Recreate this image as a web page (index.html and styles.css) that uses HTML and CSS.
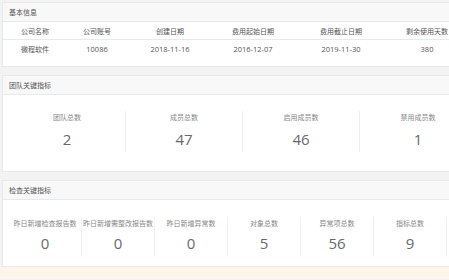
FILE: index.html
```html
<!DOCTYPE html>
<html lang="zh-CN">

<head>
    <meta charset="UTF-8">
    <meta name="viewport" content="width=device-width, initial-scale=1.0">
    <title>概览</title>
    <link rel="stylesheet" href="styles.css">
</head>

<body>
    <div class="wrapper">
        <!-- 基本信息 -->
        <div class="panel">
            <div class="panel-heading">基本信息</div>
            <div class="panel-body table-body">
                <table class="info-table">
                    <thead>
                        <tr>
                            <th class="c1">公司名称</th>
                            <th class="c2">公司账号</th>
                            <th class="c3">创建日期</th>
                            <th class="c4">费用起始日期</th>
                            <th class="c5">费用截止日期</th>
                            <th class="c6">剩余使用天数</th>
                        </tr>
                    </thead>
                    <tbody>
                        <tr>
                            <td>微程软件</td>
                            <td>10086</td>
                            <td>2018-11-16</td>
                            <td>2016-12-07</td>
                            <td>2019-11-30</td>
                            <td>380</td>
                        </tr>
                    </tbody>
                </table>
            </div>
        </div>

        <!-- 团队关键指标 -->
        <div class="panel">
            <div class="panel-heading">团队关键指标</div>
            <div class="panel-body stats team-stats">
                <div class="stat">
                    <div class="stat-label">团队总数</div>
                    <div class="stat-num">2</div>
                </div>
                <div class="stat">
                    <div class="stat-label">成员总数</div>
                    <div class="stat-num">47</div>
                </div>
                <div class="stat">
                    <div class="stat-label">启用成员数</div>
                    <div class="stat-num">46</div>
                </div>
                <div class="stat">
                    <div class="stat-label">禁用成员数</div>
                    <div class="stat-num">1</div>
                </div>
            </div>
        </div>

        <!-- 检查关键指标 -->
        <div class="panel last">
            <div class="panel-heading">检查关键指标</div>
            <div class="panel-body stats check-stats">
                <div class="stat">
                    <div class="stat-label">昨日新增检查报告数</div>
                    <div class="stat-num">0</div>
                </div>
                <div class="stat">
                    <div class="stat-label">昨日新增需整改报告数</div>
                    <div class="stat-num">0</div>
                </div>
                <div class="stat">
                    <div class="stat-label">昨日新增异常数</div>
                    <div class="stat-num">0</div>
                </div>
                <div class="stat">
                    <div class="stat-label">对象总数</div>
                    <div class="stat-num">5</div>
                </div>
                <div class="stat">
                    <div class="stat-label">异常项总数</div>
                    <div class="stat-num">56</div>
                </div>
                <div class="stat">
                    <div class="stat-label">指标总数</div>
                    <div class="stat-num">9</div>
                </div>
                <div class="stat">
                    <div class="stat-label">&nbsp;</div>
                    <div class="stat-num">&nbsp;</div>
                </div>
            </div>
        </div>
    </div>

    <div class="footer-bar"></div>
</body>

</html>
```

FILE: styles.css
```css
/* page */
html,
body {
    margin: 0;
    padding: 0;
    overflow: hidden;
}

body {
    font-family: "Noto Sans CJK SC", "Open Sans", sans-serif;
    background-color: #f3f3f4;
    color: #676a6c;
    width: 449px;
    height: 280px;
}

.wrapper {
    padding: 2px 0 0 2px;
}

/* panels */
.panel {
    width: 500px;
    background-color: #fff;
    border: 1px solid #e7eaec;
    margin-bottom: 8px;
}

.panel.last {
    margin-bottom: 0;
}

.panel-heading {
    height: 18px;
    line-height: 18px;
    padding-left: 6px;
    background-color: #f8f8f8;
    border-bottom: 1px solid #e7eaec;
    font-size: 7px;
    color: #555;
}

/* basic info table */
.table-body {
    padding-bottom: 9px;
}

.info-table {
    border-collapse: collapse;
    font-size: 7px;
    color: #555;
}

.info-table th,
.info-table td {
    height: 17px;
    padding: 0;
    text-align: center;
    font-weight: normal;
    white-space: nowrap;
}

.info-table thead tr {
    border-bottom: 1px solid #e7eaec;
}

.info-table td {
    font-family: "Open Sans", "Noto Sans CJK SC", sans-serif;
    font-size: 7.5px;
}

.info-table td:first-child {
    font-family: "Noto Sans CJK SC", sans-serif;
    font-size: 7px;
}

.c1 { width: 64px; }
.c2 { width: 60px; }
.c3 { width: 86px; }
.c4 { width: 80px; }
.c5 { width: 96px; }
.c6 { width: 76px; }

/* stat rows */
.stats {
    display: flex;
    padding-left: 6px;
}

.team-stats {
    padding-top: 16px;
    padding-bottom: 19px;
}

.check-stats {
    padding-top: 17px;
    padding-bottom: 10px;
}

.stat {
    flex: none;
    text-align: center;
    border-right: 1px solid #f0f0f0;
    padding-bottom: 2px;
}

.team-stats .stat {
    width: 116px;
}

.check-stats .stat {
    width: 72px;
}

.stat-label {
    font-size: 7px;
    line-height: 12px;
    color: #888;
    white-space: nowrap;
}

.stat-num {
    font-family: "Open Sans", sans-serif;
    font-size: 15px;
    line-height: 22px;
    margin-top: 5px;
    color: #676a6c;
}

.check-stats .stat-num {
    margin-top: 3px;
}

/* bottom strip */
.footer-bar {
    height: 12px;
    background-color: #fdf4ea;
}
```
